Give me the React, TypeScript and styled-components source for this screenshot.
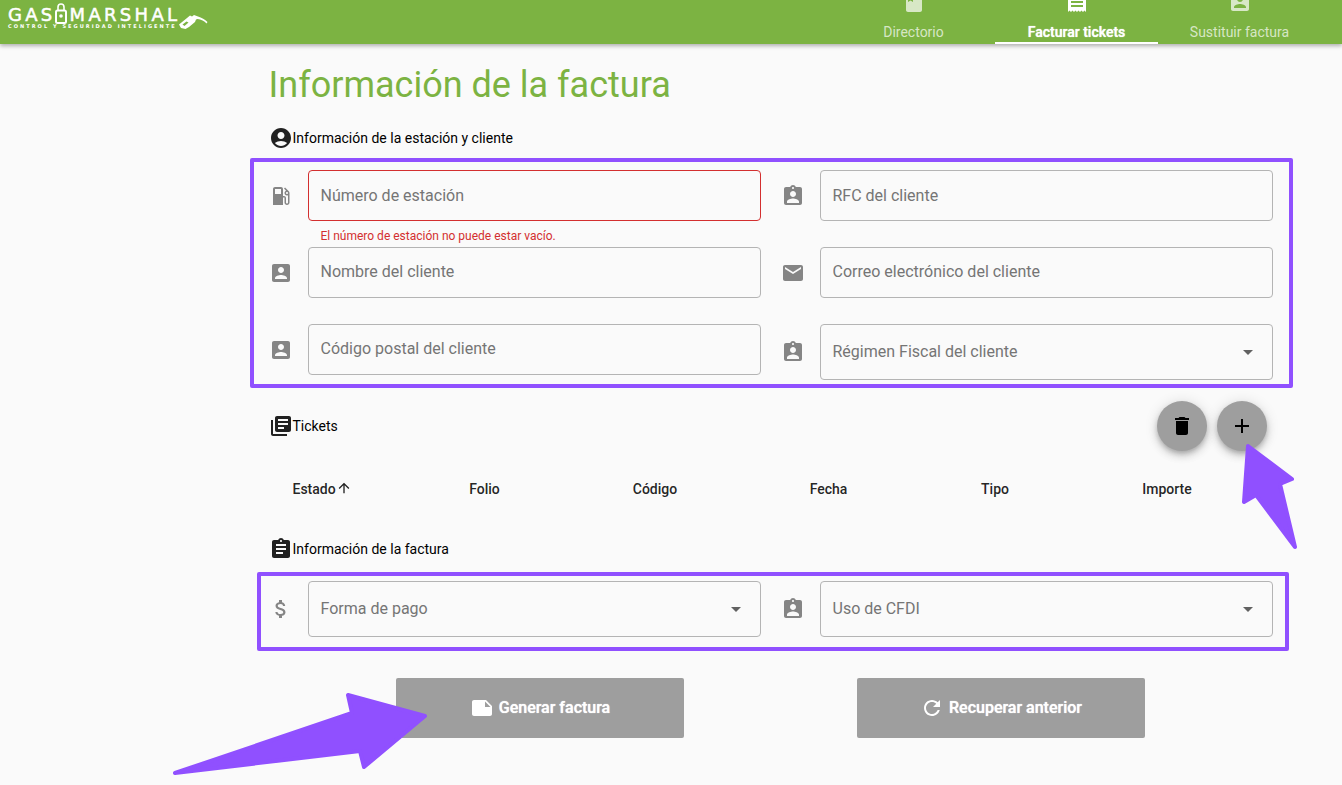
import React from 'react'
import styled, { createGlobalStyle } from 'styled-components'

const PURPLE = '#9050ff'
const GREEN = '#7cb342'

const paths = {
  account: 'M12 2C6.48 2 2 6.48 2 12s4.48 10 10 10 10-4.48 10-10S17.52 2 12 2zm0 4c1.93 0 3.5 1.57 3.5 3.5S13.93 13 12 13s-3.5-1.57-3.5-3.5S10.07 6 12 6zm0 14c-2.03 0-4.43-.82-6.14-2.88C7.55 15.8 9.68 15 12 15s4.45.8 6.14 2.12C16.43 19.18 14.03 20 12 20z',
  gas: 'M19.77 7.23l.01-.01-3.72-3.72L15 4.56l2.11 2.11c-.94.36-1.61 1.26-1.61 2.33 0 1.38 1.12 2.5 2.5 2.5.36 0 .69-.08 1-.21v7.21c0 .55-.45 1-1 1s-1-.45-1-1V14c0-1.1-.9-2-2-2h-1V5c0-1.1-.9-2-2-2H6c-1.1 0-2 .9-2 2v16h10v-7.5h1.5v5c0 1.38 1.12 2.5 2.5 2.5s2.5-1.12 2.5-2.5V9c0-.69-.28-1.32-.73-1.77zM12 10H6V5h6v5zm6 0c-.55 0-1-.45-1-1s.45-1 1-1 1 .45 1 1-.45 1-1 1z',
  box: 'M3 5v14c0 1.1.89 2 2 2h14c1.1 0 2-.9 2-2V5c0-1.1-.9-2-2-2H5c-1.11 0-2 .9-2 2zm12 4c0 1.66-1.34 3-3 3s-3-1.34-3-3 1.34-3 3-3 3 1.34 3 3zm-9 8c0-2 4-3.1 6-3.1s6 1.1 6 3.1v1H6v-1z',
  badge: 'M19 3h-4.18C14.4 1.84 13.3 1 12 1c-1.3 0-2.4.84-2.82 2H5c-1.1 0-2 .9-2 2v14c0 1.1.9 2 2 2h14c1.1 0 2-.9 2-2V5c0-1.1-.9-2-2-2zm-7 0c.55 0 1 .45 1 1s-.45 1-1 1-1-.45-1-1 .45-1 1-1zm0 4c1.66 0 3 1.34 3 3s-1.34 3-3 3-3-1.34-3-3 1.34-3 3-3zm6 12H6v-1.4c0-2 4-3.1 6-3.1s6 1.1 6 3.1V19z',
  email: 'M20 4H4c-1.1 0-1.99.9-1.99 2L2 18c0 1.1.9 2 2 2h16c1.1 0 2-.9 2-2V6c0-1.1-.9-2-2-2zm0 4l-8 5-8-5V6l8 5 8-5v2z',
  library: 'M4 6H2v14c0 1.1.9 2 2 2h14v-2H4V6zm16-4H8c-1.1 0-2 .9-2 2v12c0 1.1.9 2 2 2h12c1.1 0 2-.9 2-2V4c0-1.1-.9-2-2-2zm-1 9H9V9h10v2zm-4 4H9v-2h6v2zm4-8H9V5h10v2z',
  assignment: 'M19 3h-4.18C14.4 1.84 13.3 1 12 1c-1.3 0-2.4.84-2.82 2H5c-1.1 0-2 .9-2 2v14c0 1.1.9 2 2 2h14c1.1 0 2-.9 2-2V5c0-1.1-.9-2-2-2zm-7 0c.55 0 1 .45 1 1s-.45 1-1 1-1-.45-1-1 .45-1 1-1zm2 14H7v-2h7v2zm3-4H7v-2h10v2zm0-4H7V7h10v2z',
  money: 'M11.8 10.9c-2.27-.59-3-1.2-3-2.15 0-1.09 1.01-1.85 2.7-1.85 1.78 0 2.44.85 2.5 2.1h2.21c-.07-1.72-1.12-3.3-3.21-3.81V3h-3v2.16c-1.94.42-3.5 1.68-3.5 3.61 0 2.31 1.91 3.46 4.7 4.13 2.5.6 3 1.48 3 2.41 0 .69-.49 1.79-2.7 1.79-2.06 0-2.87-.92-2.98-2.1h-2.2c.12 2.19 1.76 3.42 3.68 3.83V21h3v-2.15c1.95-.37 3.5-1.5 3.5-3.55 0-2.84-2.43-3.81-4.7-4.4z',
  trash: 'M6 19c0 1.1.9 2 2 2h8c1.1 0 2-.9 2-2V7H6v12zM19 4h-3.5l-1-1h-5l-1 1H5v2h14V4z',
  add: 'M19 13h-6v6h-2v-6H5v-2h6V5h2v6h6v2z',
  note: 'M22 10l-6-6H4c-1.1 0-2 .9-2 2v12.01c0 1.1.9 1.99 2 1.99l16-.01c1.1 0 2-.89 2-1.99v-8zm-7-4.5l5.5 5.5H15V5.5z',
  refresh: 'M17.65 6.35C16.2 4.9 14.21 4 12 4c-4.42 0-7.99 3.58-7.99 8s3.57 8 7.99 8c3.73 0 6.84-2.55 7.73-6h-2.08c-.82 2.33-3.04 4-5.65 4-3.31 0-6-2.69-6-6s2.69-6 6-6c1.66 0 3.14.69 4.22 1.78L13 11h7V4l-2.35 2.35z',
  drop: 'M7 10l5 5 5-5z',
  up: 'M4 12l1.41 1.41L11 7.83V20h2V7.83l5.58 5.59L20 12l-8-8-8 8z',
  receipt: 'M18 17H6v-2h12v2zm0-4H6v-2h12v2zm0-4H6V7h12v2zM3 22l1.5-1.5L6 22l1.5-1.5L9 22l1.5-1.5L12 22l1.5-1.5L15 22l1.5-1.5L18 22l1.5-1.5L21 22V2l-1.5 1.5L18 2l-1.5 1.5L15 2l-1.5 1.5L12 2l-1.5 1.5L9 2 7.5 3.5 6 2 4.5 3.5 3 2v20z',
  book: 'M18 2H6c-1.1 0-2 .9-2 2v16c0 1.1.9 2 2 2h12c1.1 0 2-.9 2-2V4c0-1.1-.9-2-2-2zM6 4h5v8l-2.5-1.5L6 12V4z',
}

type IconName = keyof typeof paths

const Icon = ({ name, size = 24 }: { name: IconName; size?: number }) => (
  <svg width={size} height={size} viewBox="0 0 24 24" fill="currentColor">
    <path d={paths[name]} />
  </svg>
)

const GlobalStyle = createGlobalStyle`
  html, body {
    margin: 0;
    background: #fafafa;
    font-family: Roboto, "Liberation Sans", sans-serif;
  }
  * { box-sizing: border-box; }
`

const Page = styled.div`
  position: relative;
  width: 100%;
  height: 785px;
  overflow: hidden;
  background: #fafafa;
`

const Header = styled.header`
  display: flex;
  justify-content: space-between;
  height: 44px;
  padding: 3px 21px 0 8px;
  background: ${GREEN};
  box-shadow: 0 2px 4px rgba(0, 0, 0, 0.3);
`

const Logo = styled.div`
  display: flex;
  flex-direction: column;
  width: 200px;
  color: #fff;
`

const LogoTop = styled.div`
  display: flex;
  align-items: flex-end;
  height: 21px;
  font-family: "DejaVu Sans", sans-serif;
  font-size: 18px;
  line-height: 18px;
  -webkit-text-stroke: 0.5px #fff;
`

const LogoWord = styled.span<{ $spacing: number }>`
  letter-spacing: ${({ $spacing }) => $spacing}px;
`

const LogoLock = styled.svg`
  margin: 0 3px 0 -1px;
`

const LogoBottom = styled.div`
  display: flex;
  align-items: center;
  margin-top: -1px;
`

const LogoTag = styled.span`
  width: 172px;
  font-family: "DejaVu Sans", sans-serif;
  font-size: 5px;
  font-weight: 700;
  line-height: 6px;
  letter-spacing: 2.05px;
  white-space: nowrap;
`

const Nozzle = styled.svg`
  margin: -10px 0 0 -1px;
`

const Tabs = styled.nav`
  display: flex;
`

const Tab = styled.div<{ $active?: boolean }>`
  display: flex;
  flex-direction: column;
  align-items: center;
  width: 163px;
  height: 44px;
  overflow: hidden;
  margin-top: -3px;
  color: ${({ $active }) => ($active ? '#fff' : 'rgba(255, 255, 255, 0.7)')};
  border-bottom: 2px solid ${({ $active }) => ($active ? '#fff' : 'transparent')};
  font-size: 14px;
  font-weight: ${({ $active }) => ($active ? 500 : 400)};
  line-height: 20px;
  text-shadow: ${({ $active }) => ($active ? '0 0 1px #fff' : 'none')};

  svg {
    flex: none;
    margin-top: -10px;
    margin-bottom: 8px;
  }
`

const Main = styled.main`
  width: 1010px;
  margin-left: 268px;
`

const Title = styled.h1`
  margin: 21px 0 0;
  padding-left: 0.5px;
  color: ${GREEN};
  font-size: 36px;
  font-weight: 400;
  line-height: 40px;
`

const SectionHead = styled.div<{ $top: number }>`
  display: flex;
  align-items: center;
  height: 24px;
  margin: ${({ $top }) => $top}px 0 20px;
  padding-left: 0.5px;
  color: #000;
  font-size: 14px;
  svg { color: rgba(0, 0, 0, 0.87); }
`

const FormGrid = styled.div`
  display: grid;
  grid-template-columns: 493px 493px;
  column-gap: 19px;
  grid-auto-rows: 77px;
`

const PayGrid = styled(FormGrid)`
  grid-auto-rows: 56px;
`

const Cell = styled.div`
  position: relative;
  display: flex;
  align-items: center;
  align-self: start;
`

const FieldIcon = styled.div`
  display: flex;
  flex: none;
  width: 40px;
  padding-left: 0.5px;
  color: #858585;
`

const Input = styled.input<{ $error?: boolean; $firstRow?: boolean }>`
  width: 452.5px;
  height: 51px;
  padding: 0 12px ${({ $firstRow }) => ($firstRow ? 1 : 3)}px 11.5px;
  background: transparent;
  border: 1px solid ${({ $error }) => ($error ? '#d32f2f' : '#b4b4b4')};
  border-radius: 4px;
  font-family: inherit;
  font-size: 16px;
  outline: none;

  &::placeholder {
    color: #757575;
    opacity: 1;
  }
`

const Select = styled.div`
  display: flex;
  align-items: center;
  justify-content: space-between;
  width: 452.5px;
  height: 56px;
  padding: 0 12px 2px 11.5px;
  color: #757575;
  border: 1px solid #b4b4b4;
  border-radius: 4px;
  font-size: 16px;

  svg { color: #616161; margin-top: 2px; }
`

const ErrorText = styled.div`
  position: absolute;
  top: 59px;
  left: 52.5px;
  color: #d32f2f;
  font-size: 12px;
  line-height: 14px;
`

const TicketsBar = styled.div`
  display: flex;
  align-items: center;
  justify-content: space-between;
  width: 999px;
  height: 50px;
`

const TicketsHead = styled(SectionHead)`
  margin: 0;
`

const Fabs = styled.div`
  display: flex;
  gap: 10px;
`

const Fab = styled.button`
  display: flex;
  align-items: center;
  justify-content: center;
  width: 50px;
  height: 50px;
  padding: 0;
  color: #000;
  background: #9e9e9e;
  border: 0;
  border-radius: 50%;
  box-shadow: 0 3px 5px -1px rgba(0, 0, 0, 0.2), 0 5px 8px rgba(0, 0, 0, 0.14), 0 1px 14px rgba(0, 0, 0, 0.12);
`

const TableHead = styled.div`
  display: grid;
  grid-template-columns: 131px 171px 170px 177px 156px 188px;
  align-items: center;
  height: 40px;
  margin-top: 18px;
  color: rgba(0, 0, 0, 0.87);
  font-size: 14px;
  font-weight: 500;
  text-align: center;
`

const EstadoHead = styled.div`
  display: flex;
  align-items: center;
  padding-left: 24.5px;
  svg { margin: -3px 0 0 0; }
`

const Actions = styled.div`
  display: flex;
  gap: 173px;
  margin-top: 41px;
  padding-left: 128px;
`

const ActionButton = styled.button`
  display: flex;
  align-items: center;
  justify-content: center;
  gap: 5px;
  width: 288px;
  height: 60px;
  padding: 0 0 2px;
  color: #fff;
  background: #9e9e9e;
  border: 0;
  border-radius: 2px;
  font-family: inherit;
  font-size: 16px;
  font-weight: 500;
  text-shadow: 0 0 1px #fff;

  svg { margin-top: 2px; }
`

const Frame = styled.div<{ $x: number; $y: number; $w: number; $h: number }>`
  position: absolute;
  left: ${({ $x }) => $x}px;
  top: ${({ $y }) => $y}px;
  width: ${({ $w }) => $w}px;
  height: ${({ $h }) => $h}px;
  border: 4px solid ${PURPLE};
  border-radius: 2px;
  pointer-events: none;
`

const ArrowLayer = styled.svg`
  position: absolute;
  inset: 0;
  pointer-events: none;
`

export default function App() {
  return (
    <Page>
      <GlobalStyle />
      <Header>
        <Logo>
          <LogoTop>
            <LogoWord $spacing={3.3}>GAS</LogoWord>
            <LogoLock width="12" height="21" viewBox="0 0 12 21" fill="none" stroke="#fff">
              <path d="M3 7V4a3 3 0 0 1 6 0v3" strokeWidth="1.6" />
              <rect x="1" y="7.5" width="10" height="12.5" rx="1.5" strokeWidth="2" />
              <circle cx="6" cy="13" r="1.8" fill="#fff" stroke="none" />
            </LogoLock>
            <LogoWord $spacing={3.3}>MARSHAL</LogoWord>
          </LogoTop>
          <LogoBottom>
            <LogoTag>CONTROL Y SEGURIDAD INTELIGENTE</LogoTag>
            <Nozzle width="29" height="16" viewBox="0 0 29 16" fill="#fff">
              <path d="M0 11.5L8 5l3-2.5 2 1 2-1.5 4 1.5c3.500 1 7 3 9.500 5.500l-1 1.500C25.500 8 22 6.500 18.500 6l-1.500.5-1 2.500-6 5-3.500 2L2 15z" />
              <path d="M3.500 11.500l4-3 2 1-4 3.500z" fill={GREEN} />
            </Nozzle>
          </LogoBottom>
        </Logo>
        <Tabs>
          <Tab>
            <Icon name="book" />
            Directorio
          </Tab>
          <Tab $active>
            <Icon name="receipt" />
            Facturar tickets
          </Tab>
          <Tab>
            <Icon name="box" />
            Sustituir factura
          </Tab>
        </Tabs>
      </Header>

      <Main>
        <Title>Información de la factura</Title>

        <SectionHead $top={21}>
          <Icon name="account" />
          Información de la estación y cliente
        </SectionHead>
        <FormGrid>
          <Cell>
            <FieldIcon><Icon name="gas" /></FieldIcon>
            <Input $error $firstRow placeholder="Número de estación" />
            <ErrorText>El número de estación no puede estar vacío.</ErrorText>
          </Cell>
          <Cell>
            <FieldIcon><Icon name="badge" /></FieldIcon>
            <Input $firstRow placeholder="RFC del cliente" />
          </Cell>
          <Cell>
            <FieldIcon><Icon name="box" /></FieldIcon>
            <Input placeholder="Nombre del cliente" />
          </Cell>
          <Cell>
            <FieldIcon><Icon name="email" /></FieldIcon>
            <Input placeholder="Correo electrónico del cliente" />
          </Cell>
          <Cell>
            <FieldIcon><Icon name="box" /></FieldIcon>
            <Input placeholder="Código postal del cliente" />
          </Cell>
          <Cell>
            <FieldIcon><Icon name="badge" /></FieldIcon>
            <Select>
              Régimen Fiscal del cliente
              <Icon name="drop" />
            </Select>
          </Cell>
        </FormGrid>

        <TicketsBar>
          <TicketsHead $top={0}>
            <Icon name="library" />
            Tickets
          </TicketsHead>
          <Fabs>
            <Fab><Icon name="trash" /></Fab>
            <Fab><Icon name="add" /></Fab>
          </Fabs>
        </TicketsBar>

        <TableHead>
          <EstadoHead>
            Estado
            <Icon name="up" size={16} />
          </EstadoHead>
          <div>Folio</div>
          <div>Código</div>
          <div>Fecha</div>
          <div>Tipo</div>
          <div>Importe</div>
        </TableHead>

        <SectionHead $top={28}>
          <Icon name="assignment" />
          Información de la factura
        </SectionHead>
        <PayGrid>
          <Cell>
            <FieldIcon><Icon name="money" /></FieldIcon>
            <Select>
              Forma de pago
              <Icon name="drop" />
            </Select>
          </Cell>
          <Cell>
            <FieldIcon><Icon name="badge" /></FieldIcon>
            <Select>
              Uso de CFDI
              <Icon name="drop" />
            </Select>
          </Cell>
        </PayGrid>

        <Actions>
          <ActionButton>
            <Icon name="note" />
            Generar factura
          </ActionButton>
          <ActionButton>
            <Icon name="refresh" />
            Recuperar anterior
          </ActionButton>
        </Actions>
      </Main>

      {/* annotations drawn over the page */}
      <Frame $x={250} $y={158} $w={1043} $h={230} />
      <Frame $x={257} $y={572} $w={1032} $h={79} />
      <ArrowLayer width="1342" height="785" viewBox="0 0 1342 785">
        <g fill={PURPLE} stroke={PURPLE} strokeWidth="4" strokeLinejoin="round">
          <polygon points="1248,446 1292,479 1280,484 1295,547 1256,495 1244,502" />
          <polygon points="425,716 348,695 352,713 175,773 360,751 364,767" />
        </g>
      </ArrowLayer>
    </Page>
  )
}
